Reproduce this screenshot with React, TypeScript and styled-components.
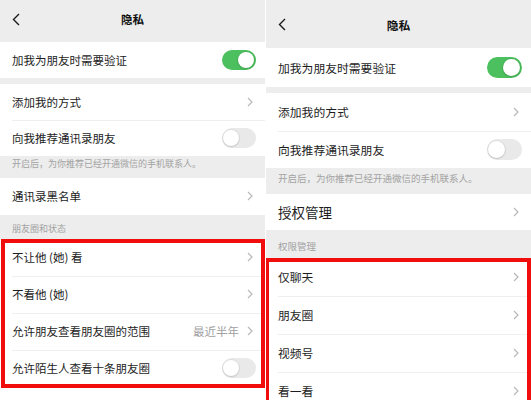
import React from 'react';
import styled, { createGlobalStyle, ThemeProvider } from 'styled-components';

type Metrics = {
  header: number;
  headerPadBottom: number;
  font: number;
  small: number;
  toggleW: number;
  toggleH: number;
};

const leftMetrics: Metrics = {
  header: 42,
  headerPadBottom: 4,
  font: 11.5,
  small: 9,
  toggleW: 34,
  toggleH: 20,
};

const rightMetrics: Metrics = {
  header: 48,
  headerPadBottom: 0,
  font: 11.8,
  small: 9.5,
  toggleW: 35,
  toggleH: 21,
};

const GlobalStyle = createGlobalStyle`
  html, body {
    margin: 0;
    padding: 0;
    background: #ffffff;
  }
  body {
    font-family: "Noto Sans CJK SC", "Noto Sans", sans-serif;
    color: #1d1d1d;
  }
`;

const Page = styled.div`
  width: 531px;
  height: 400px;
  display: flex;
  gap: 1px;
  overflow: hidden;
  background: #ffffff;
`;

const Panel = styled.div<{ $width: number }>`
  width: ${({ $width }) => $width}px;
  height: 400px;
  display: flex;
  flex-direction: column;
  background: #ededed;
  overflow: hidden;
`;

const Header = styled.div`
  height: ${({ theme }) => theme.header}px;
  padding-bottom: ${({ theme }) => theme.headerPadBottom}px;
  box-sizing: border-box;
  display: grid;
  grid-template-columns: 40px 1fr 40px;
  align-items: center;
  background: #ededed;
  flex-shrink: 0;
`;

const BackButton = styled.div`
  padding-left: 12px;
  display: flex;
  align-items: center;
`;

const Title = styled.div`
  text-align: center;
  font-size: ${({ theme }) => theme.font}px;
  font-weight: 600;
  color: #111;
`;

const Group = styled.div`
  background: #ffffff;
  display: flex;
  flex-direction: column;
  flex-shrink: 0;
`;

// red annotation frame drawn over the highlighted rows
const Highlight = styled(Group)<{ $inset: string }>`
  position: relative;

  &::after {
    content: '';
    position: absolute;
    inset: ${({ $inset }) => $inset};
    border: 4px solid #f20d0d;
    pointer-events: none;
  }
`;

const Filler = styled.div`
  flex: 1;
  background: #ffffff;
`;

const Gap = styled.div<{ $h: number }>`
  height: ${({ $h }) => $h}px;
  flex-shrink: 0;
`;

const Row = styled.div<{ $h: number }>`
  height: ${({ $h }) => $h}px;
  padding-left: 12px;
  display: flex;
  flex-shrink: 0;
`;

const RowInner = styled.div<{ $divider?: boolean; $padRight: number }>`
  flex: 1;
  display: flex;
  align-items: center;
  justify-content: space-between;
  padding-right: ${({ $padRight }) => $padRight}px;
  padding-bottom: 2px;
  border-top: 1px solid ${({ $divider }) => ($divider ? '#efefef' : 'transparent')};
`;

const Label = styled.span<{ $size?: number }>`
  font-size: ${({ $size, theme }) => $size ?? theme.font}px;
  color: #1d1d1d;
  white-space: nowrap;
`;

const Trailing = styled.div`
  display: flex;
  align-items: center;
  gap: 8px;
`;

const Value = styled.span`
  font-size: ${({ theme }) => theme.font}px;
  color: #a0a0a0;
`;

const Note = styled.div<{ $h: number; $top: number }>`
  height: ${({ $h }) => $h}px;
  box-sizing: border-box;
  padding: ${({ $top }) => $top}px 12px 0;
  font-size: ${({ theme }) => theme.small}px;
  color: #a3a3a3;
  white-space: nowrap;
  flex-shrink: 0;
`;

const SectionTitle = styled.div<{ $h: number; $bottom: number }>`
  height: ${({ $h }) => $h}px;
  box-sizing: border-box;
  padding: 0 12px ${({ $bottom }) => $bottom}px;
  display: flex;
  align-items: flex-end;
  font-size: ${({ theme }) => theme.small}px;
  color: #a3a3a3;
  flex-shrink: 0;
`;

const Switch = styled.span<{ $on?: boolean }>`
  position: relative;
  width: ${({ theme }) => theme.toggleW}px;
  height: ${({ theme }) => theme.toggleH}px;
  border-radius: 999px;
  box-sizing: border-box;
  background: ${({ $on }) => ($on ? '#4cbf5e' : '#e9e9e9')};
  flex-shrink: 0;

  &::after {
    content: '';
    position: absolute;
    top: 2px;
    left: ${({ $on, theme }) => ($on ? theme.toggleW - theme.toggleH + 2 : 1)}px;
    width: ${({ theme }) => theme.toggleH - 4}px;
    height: ${({ theme }) => theme.toggleH - 4}px;
    border-radius: 50%;
    background: #ffffff;
    box-shadow: 0 0 0 1px rgba(0, 0, 0, 0.05), 0 1px 2px rgba(0, 0, 0, 0.12);
  }
`;

const Chevron = () => (
  <svg width="6" height="10" viewBox="0 0 6 10">
    <polyline points="1,1 5,5 1,9" fill="none" stroke="#b9b9b9" strokeWidth="1.2" />
  </svg>
);

const BackIcon = () => (
  <svg width="8" height="13" viewBox="0 0 8 13">
    <polyline points="7,1 1.5,6.5 7,12" fill="none" stroke="#1a1a1a" strokeWidth="1.4" />
  </svg>
);

type Item = {
  label: string;
  h: number;
  kind: 'chevron' | 'on' | 'off';
  value?: string;
  size?: number;
};

const ItemRow = ({ item, divider }: { item: Item; divider: boolean }) => {
  const isToggle = item.kind !== 'chevron';
  return (
    <Row $h={item.h}>
      <RowInner $divider={divider} $padRight={isToggle ? 9 : 12}>
        <Label $size={item.size}>{item.label}</Label>
        {isToggle ? (
          <Switch $on={item.kind === 'on'} />
        ) : (
          <Trailing>
            {item.value && <Value>{item.value}</Value>}
            <Chevron />
          </Trailing>
        )}
      </RowInner>
    </Row>
  );
};

const Items = ({ items }: { items: Item[] }) => (
  <>
    {items.map((item, i) => (
      <ItemRow key={item.label} item={item} divider={i > 0} />
    ))}
  </>
);

const NavHeader = () => (
  <Header>
    <BackButton>
      <BackIcon />
    </BackButton>
    <Title>隐私</Title>
    <span />
  </Header>
);

const noteText = '开启后，为你推荐已经开通微信的手机联系人。';

const LeftScreen = () => (
  <ThemeProvider theme={leftMetrics}>
    <Panel $width={265}>
      <NavHeader />
      <Group>
        <Items items={[{ label: '加我为朋友时需要验证', h: 36, kind: 'on' }]} />
      </Group>
      <Gap $h={6} />
      <Group>
        <Items
          items={[
            { label: '添加我的方式', h: 36, kind: 'chevron' },
            { label: '向我推荐通讯录朋友', h: 36, kind: 'off' },
          ]}
        />
      </Group>
      <Note $h={22} $top={1}>{noteText}</Note>
      <Group>
        <Items items={[{ label: '通讯录黑名单', h: 37, kind: 'chevron' }]} />
      </Group>
      <SectionTitle $h={24} $bottom={4}>朋友圈和状态</SectionTitle>
      <Highlight $inset="0 0 -1px 1px">
        <Items
          items={[
            { label: '不让他 (她) 看', h: 37, kind: 'chevron' },
            { label: '不看他 (她)', h: 37, kind: 'chevron' },
            { label: '允许朋友查看朋友圈的范围', h: 37, kind: 'chevron', value: '最近半年' },
            { label: '允许陌生人查看十条朋友圈', h: 37, kind: 'off' },
          ]}
        />
      </Highlight>
      <Filler />
    </Panel>
  </ThemeProvider>
);

const RightScreen = () => (
  <ThemeProvider theme={rightMetrics}>
    <Panel $width={265}>
      <NavHeader />
      <Group>
        <Items items={[{ label: '加我为朋友时需要验证', h: 39, kind: 'on' }]} />
      </Group>
      <Gap $h={6} />
      <Group>
        <Items
          items={[
            { label: '添加我的方式', h: 38, kind: 'chevron' },
            { label: '向我推荐通讯录朋友', h: 37, kind: 'off' },
          ]}
        />
      </Group>
      <Note $h={26} $top={3}>{noteText}</Note>
      <Group>
        <Items items={[{ label: '授权管理', h: 36, kind: 'chevron', size: 13.5 }]} />
      </Group>
      <SectionTitle $h={28} $bottom={5}>权限管理</SectionTitle>
      <Highlight $inset="0 0 -20px -1px">
        <Items
          items={[
            { label: '仅聊天', h: 38, kind: 'chevron' },
            { label: '朋友圈', h: 38, kind: 'chevron' },
            { label: '视频号', h: 38, kind: 'chevron' },
            { label: '看一看', h: 38, kind: 'chevron' },
          ]}
        />
      </Highlight>
    </Panel>
  </ThemeProvider>
);

export default function App() {
  return (
    <>
      <GlobalStyle />
      <Page>
        <LeftScreen />
        <RightScreen />
      </Page>
    </>
  );
}
